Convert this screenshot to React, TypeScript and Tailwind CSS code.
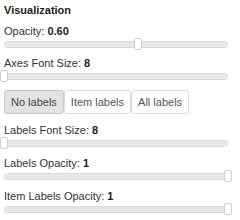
import React from 'react';

interface SliderProps {
  value: number; // 0..1
}

const Slider: React.FC<SliderProps> = ({ value }) => {
  return (
    <div className="relative h-[12px] mr-[12px]">
      <div className="absolute left-0 right-0 top-[3px] h-[7px] rounded-full bg-[#e8e8e8] border border-[#dadada]" />
      <div
        className="absolute top-0 h-[12px] w-[8px] -ml-[4px] rounded-[2px] bg-white border border-[#cfcfcf]"
        style={{ left: `${value * 100}%` }}
      />
    </div>
  );
};

const Label: React.FC<{ name: string; value: string; className?: string }> = ({ name, value, className }) => (
  <div className={`h-[14px] leading-[14px] text-[11px] text-[#333] ${className ?? ''}`}>
    {name}: <span className="font-bold text-[#222]">{value}</span>
  </div>
);

const labelModes = ['No labels', 'Item labels', 'All labels'];

export default function App() {
  const active = 'No labels';

  return (
    <div className="w-[240px] h-[220px] bg-white pl-[4px] pt-[4px] overflow-hidden" style={{ fontFamily: '"Liberation Sans", Arial, sans-serif' }}>
      <div className="h-[12px] leading-[12px] text-[11px] font-bold text-[#222]">Visualization</div>

      <Label name="Opacity" value="0.60" className="mt-[8px]" />
      <Slider value={0.6} />

      <Label name="Axes Font Size" value="8" className="mt-[6px]" />
      <Slider value={0} />

      <div className="flex mt-[8px] h-[24px]">
        {labelModes.map((mode) => (
          <button
            key={mode}
            className={`px-[6px] text-[11px] rounded-[3px] border ${
              mode === active ? 'bg-[#e2e2e2] border-[#c8c8c8] text-[#444]' : 'bg-white border-[#dcdcdc] text-[#555]'
            }`}
          >
            {mode}
          </button>
        ))}
      </div>

      <Label name="Labels Font Size" value="8" className="mt-[9px]" />
      <Slider value={0} />

      <Label name="Labels Opacity" value="1" className="mt-[7px]" />
      <Slider value={1} />

      <Label name="Item Labels Opacity" value="1" className="mt-[7px]" />
      <Slider value={1} />
    </div>
  );
}
